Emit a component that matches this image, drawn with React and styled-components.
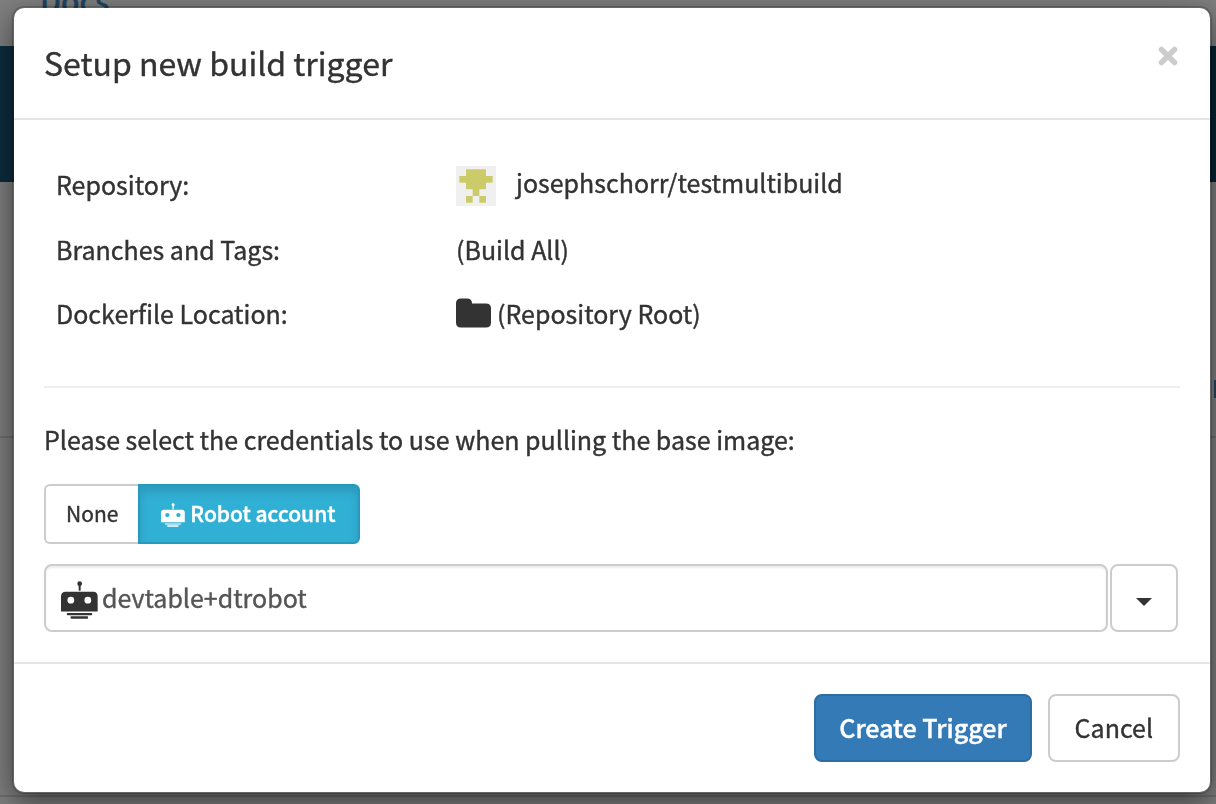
import React from "react";
import styled, { createGlobalStyle, css } from "styled-components";

const GlobalStyle = createGlobalStyle`
  *, *::before, *::after { box-sizing: border-box; }
  html, body, #root { height: 100%; }
  body {
    margin: 0;
    color: #333;
    background: #fff;
    font-family: "Noto Sans CJK SC", "Noto Sans", sans-serif;
    font-size: 25px;
    line-height: 40px;
    -webkit-text-stroke: 0.4px currentColor;
    overflow: hidden;
  }
  button, input { font: inherit; color: inherit; margin: 0; }
`;

const Page = styled.div`
  height: 100%;
  overflow: hidden;
`;

const PageNav = styled.nav`
  display: flex;
  align-items: flex-end;
  height: 46px;
  padding: 0 40px 26px;
`;

const NavLink = styled.a`
  color: #428bca;
  font-size: 30px;
  font-weight: 500;
  text-decoration: none;
`;

const PageBanner = styled.div`
  height: 136px;
  background: linear-gradient(to right, #18587f, #104462);
`;

const PageSection = styled.section`
  display: flex;
  justify-content: flex-end;
  align-items: flex-end;
  height: ${(p) => p.$height}px;
  padding-bottom: 38px;
  border-bottom: 2px solid #ddd;
`;

const PageMarker = styled.span`
  width: 2px;
  height: 18px;
  background: #428bca;
`;

const Backdrop = styled.div`
  position: fixed;
  inset: 0;
  padding: 6px 4px 10px 12px;
  background: rgba(0, 0, 0, 0.5);
  overflow: hidden;
`;

const Modal = styled.div`
  border: 2px solid rgba(0, 0, 0, 0.2);
  border-radius: 12px;
  background: #fff;
  background-clip: padding-box;
  box-shadow: 0 10px 30px rgba(0, 0, 0, 0.5);
`;

const ModalHeader = styled.header`
  display: flex;
  justify-content: space-between;
  align-items: flex-start;
  padding: 30px 30px 32px;
  border-bottom: 2px solid #e5e5e5;
`;

const Title = styled.h4`
  margin: 0;
  font-size: 32px;
  font-weight: 400;
  line-height: 48px;
`;

const CloseButton = styled.button`
  display: flex;
  padding: 8px 2px;
  border: 0;
  background: none;
  color: #ccc;
  cursor: pointer;
`;

const ModalBody = styled.div`
  padding: 32px 30px 30px;
`;

const Summary = styled.table`
  width: 100%;
  border-spacing: 0;
  table-layout: fixed;
  tr:first-child > * {
    height: 65px;
    padding-bottom: 1px;
  }
`;

const Label = styled.th`
  width: 412px;
  height: 64px;
  padding: 0 12px;
  font-weight: 400;
  text-align: left;
`;

const Value = styled.td`
  padding: 0;
`;

const ValueLine = styled.span`
  display: flex;
  align-items: center;
  gap: 6px;
`;

const RepositoryLine = styled(ValueLine)`
  align-items: flex-start;
  gap: 20px;
  svg { margin-top: 4px; }
`;

const Divider = styled.hr`
  margin: 41px 0 32px;
  border: 0;
  border-top: 2px solid #eee;
`;

const Prompt = styled.p`
  margin: 0 0 24px;
  line-height: 38px;
  padding-bottom: 2px;
`;

const ButtonGroup = styled.div`
  display: flex;
  margin-bottom: 20px;
`;

const ToggleButton = styled.button`
  display: flex;
  align-items: center;
  gap: 5px;
  height: 60px;
  padding: 0 20px 2px;
  border: 2px solid #ccc;
  background: #fff;
  font-size: 21px;
  cursor: pointer;
  svg { margin-top: 4px; }
  &:first-child { border-radius: 6px 0 0 6px; border-right: 0; }
  &:last-child { border-radius: 0 6px 6px 0; }
  ${(p) =>
    p.$active &&
    css`
      padding: 0 22px 2px 21px;
      border-color: #269abc;
      background: #31b0d5;
      color: #fff;
      font-weight: 500;
      box-shadow: inset 0 6px 10px rgba(0, 0, 0, 0.125);
    `}
`;

const Combo = styled.div`
  display: flex;
  gap: 2px;
  padding-right: 2px;
`;

const Field = styled.label`
  display: flex;
  flex: 1;
  align-items: center;
  gap: 4px;
  height: 68px;
  padding: 0 15px 2px;
  border: 2px solid #ccc;
  border-radius: 8px;
  box-shadow: inset 0 2px 2px rgba(0, 0, 0, 0.075);
  svg { margin-top: 6px; }
`;

const FieldInput = styled.input`
  flex: 1;
  min-width: 0;
  height: 40px;
  padding: 0;
  border: 0;
  outline: 0;
  background: none;
  color: #555;
`;

const Button = styled.button`
  height: 68px;
  padding: 0 ${(p) => (p.$primary ? 23 : 25)}px 2px;
  border: 2px solid ${(p) => (p.$primary ? "#2e6da4" : "#ccc")};
  border-radius: 8px;
  background: ${(p) => (p.$primary ? "#337ab7" : "#fff")};
  color: ${(p) => (p.$primary ? "#fff" : "#333")};
  font-weight: ${(p) => (p.$primary ? 500 : 400)};
  cursor: pointer;
`;

const DropdownButton = styled(Button)`
  display: flex;
  align-items: center;
  justify-content: center;
  width: 68px;
  padding: 8px 0 0;
`;

const ModalFooter = styled.footer`
  display: flex;
  justify-content: flex-end;
  gap: 16px;
  padding: 30px;
  border-top: 2px solid #e5e5e5;
`;

const Icon = styled.svg`
  display: block;
  flex: none;
  fill: currentColor;
`;

function RobotIcon({ width, height, barOpacity = 1 }) {
  return (
    <Icon width={width} height={height} viewBox="0 0 109 113" preserveAspectRatio="none" aria-hidden="true">
      <circle cx="55" cy="8" r="7" />
      <rect x="52" y="8" width="6" height="21" rx="2" />
      <path
        fillRule="evenodd"
        d="M14 32H95Q108 32 108 46V91H0V46Q0 32 14 32ZM29 47a10 10 0 1 0 0 20a10 10 0 1 0 0-20ZM79 47a10 10 0 1 0 0 20a10 10 0 1 0 0-20Z"
      />
      <rect x="17" y="95" width="75" height="7" rx="3" opacity={barOpacity} />
      <rect x="28" y="105" width="52" height="7" rx="3" />
    </Icon>
  );
}

function Avatar() {
  return (
    <Icon width="40" height="40" viewBox="0 0 12 12" aria-hidden="true">
      <path fill="#f0f0f0" d="M0 0h12v12H0z" />
      <path fill="#cbcb69" d="M3 1h6v2h2v2H9v2H7v2H5V7H3V5H1V3h2zM3 9h2v2H3zM7 9h2v2H7z" />
    </Icon>
  );
}

function FolderIcon() {
  return (
    <Icon width="35" height="30" viewBox="0 0 35 30" aria-hidden="true">
      <path d="M5 0.5H11Q16 0.5 16 5.5H30Q35 5.5 35 10.5V24.5Q35 29.5 30 29.5H5Q0 29.5 0 24.5V5.5Q0 0.5 5 0.5Z" />
    </Icon>
  );
}

export default function App() {
  return (
    <>
      <GlobalStyle />
      <Page>
        <PageNav>
          <NavLink href="#docs">Docs</NavLink>
        </PageNav>
        <PageBanner />
        <PageSection $height={256}>
          <PageMarker />
        </PageSection>
        <PageSection $height={359} />
      </Page>
      <Backdrop>
        <Modal role="dialog" aria-modal="true" aria-labelledby="dialog-title">
          <ModalHeader>
            <Title id="dialog-title">Setup new build trigger</Title>
            <CloseButton type="button" aria-label="Close">
              <Icon width="20" height="20" viewBox="0 0 20 20" aria-hidden="true">
                <path d="M3.5 3.5L16.5 16.5M16.5 3.5L3.5 16.5" stroke="currentColor" strokeWidth="5.5" strokeLinecap="round" />
              </Icon>
            </CloseButton>
          </ModalHeader>
          <ModalBody>
            <Summary>
              <tbody>
                <tr>
                  <Label scope="row">Repository:</Label>
                  <Value>
                    <RepositoryLine>
                      <Avatar />
                      josephschorr/testmultibuild
                    </RepositoryLine>
                  </Value>
                </tr>
                <tr>
                  <Label scope="row">Branches and Tags:</Label>
                  <Value>(Build All)</Value>
                </tr>
                <tr>
                  <Label scope="row">Dockerfile Location:</Label>
                  <Value>
                    <ValueLine>
                      <FolderIcon />
                      (Repository Root)
                    </ValueLine>
                  </Value>
                </tr>
              </tbody>
            </Summary>
            <Divider />
            <Prompt>Please select the credentials to use when pulling the base image:</Prompt>
            <ButtonGroup role="group" aria-label="Credentials">
              <ToggleButton type="button">None</ToggleButton>
              <ToggleButton type="button" $active aria-pressed="true">
                <RobotIcon width={24} height={24} barOpacity={0.7} />
                Robot account
              </ToggleButton>
            </ButtonGroup>
            <Combo>
              <Field>
                <RobotIcon width={37} height={38} />
                <FieldInput type="text" aria-label="Robot account name" defaultValue="devtable+dtrobot" />
              </Field>
              <DropdownButton type="button" aria-label="Show robot accounts">
                <Icon width="16" height="8" viewBox="0 0 16 8" aria-hidden="true">
                  <path d="M0 0h16L8 8z" />
                </Icon>
              </DropdownButton>
            </Combo>
          </ModalBody>
          <ModalFooter>
            <Button type="button" $primary>Create Trigger</Button>
            <Button type="button">Cancel</Button>
          </ModalFooter>
        </Modal>
      </Backdrop>
    </>
  );
}
